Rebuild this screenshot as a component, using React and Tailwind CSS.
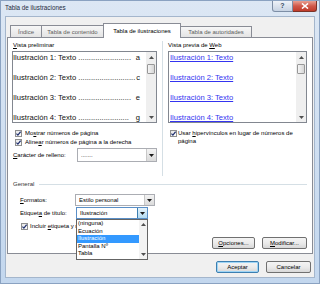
import React from 'react';

// Windows 7 "Tabla de ilustraciones" dialog, scaled down

const Down = () => (
  <svg width="5" height="3" viewBox="0 0 5 3"><path d="M0 0h5L2.5 3z" fill="#1a1a1a" /></svg>
);

const ArrowUp = () => (
  <svg width="5" height="3" viewBox="0 0 5 3"><path d="M0 3h5L2.5 0z" fill="#505050" /></svg>
);

const ArrowDown = () => (
  <svg width="5" height="3" viewBox="0 0 5 3"><path d="M0 0h5L2.5 3z" fill="#505050" /></svg>
);

function Check() {
  return (
    <span className="flex h-[7px] w-[7px] shrink-0 items-center justify-center border border-[#8e8f8f] bg-gradient-to-br from-[#e6e6e6] to-[#ffffff]">
      <svg width="5" height="5" viewBox="0 0 5 5">
        <path d="M0.4 2.6 L1.9 4.1 L4.6 0.7" fill="none" stroke="#1f2f6e" strokeWidth="1.2" />
      </svg>
    </span>
  );
}

function VScroll() {
  return (
    <div className="flex w-[10px] shrink-0 flex-col bg-[#efefef]">
      <div className="flex h-[10px] items-center justify-center">
        <ArrowUp />
      </div>
      <div className="flex-1">
        <div className="mx-[1px] mt-[2px] h-[10px] rounded-[1px] border border-[#989898] bg-gradient-to-r from-[#f5f5f5] to-[#d6d6d6]" />
      </div>
      <div className="flex h-[10px] items-center justify-center">
        <ArrowDown />
      </div>
    </div>
  );
}

function Combo({ value, width, focus }) {
  return (
    <div className={`flex h-full items-center border bg-white ${width} ${focus ? 'border-[#5a8fc7]' : 'border-[#abadb3]'}`}>
      <span className="flex-1 truncate pl-[3px]">{value}</span>
      <span
        className={`flex h-full w-[10px] items-center justify-center border-l ${
          focus ? 'border-[#3c7fb1] bg-gradient-to-b from-[#e6f3fb] to-[#b3dbf2]' : 'border-[#c8c8c8] bg-gradient-to-b from-[#f3f3f3] to-[#dadada]'
        }`}
      >
        <Down />
      </span>
    </div>
  );
}

function Btn({ children, width, def }) {
  return (
    <div
      className={`flex h-full items-center justify-center rounded-[2px] border bg-gradient-to-b from-[#f4f4f4] via-[#ebebeb] to-[#d8d8d8] ${width} ${
        def ? 'border-[#3c7fb1] shadow-[inset_0_0_0_1px_#9fd5f5]' : 'border-[#707070]'
      }`}
    >
      {children}
    </div>
  );
}

const u = (c) => <span className="underline decoration-[0.5px] underline-offset-[1px]">{c}</span>;

const preview = [
  ['Ilustración 1: Texto', '.........................', ' a'],
  ['Ilustración 2: Texto', '...........................', 'c'],
  ['Ilustración 3: Texto', '.........................', ' e'],
  ['Ilustración 4: Texto', '........................', ' g'],
];

export default function App() {
  return (
    <div className="flex h-[284px] w-[320px] flex-col overflow-hidden border border-[#8aa2c1] bg-gradient-to-b from-[#dce7f4] to-[#c3d7ee] font-['Liberation_Sans','Arial',sans-serif] text-[6px] leading-[8px] text-black">
      {/* title bar */}
      <div className="flex h-[15px] shrink-0 items-start justify-between">
        <span className="pl-[4px] pt-[3px] text-[6.3px] leading-[8px] text-[#1e2b3c]">Tabla de ilustraciones</span>
        <div className="mr-[2px] flex h-[11px] items-stretch">
          <div className="flex w-[21px] items-center justify-center rounded-bl-[3px] border border-t-0 border-[#7d8ea6] bg-gradient-to-b from-[#eef2f8] to-[#c7d3e3] text-[7px] font-bold text-[#384a62]">
            ?
          </div>
          <div className="flex w-[24px] items-center justify-center rounded-br-[3px] border border-l-0 border-t-0 border-[#7b3328] bg-gradient-to-b from-[#e8a093] via-[#d0584a] to-[#c03b2a]">
            <svg width="8" height="6" viewBox="0 0 8 6">
              <path d="M1 0.5 L7 5.5 M7 0.5 L1 5.5" stroke="#ffffff" strokeWidth="1.6" />
            </svg>
          </div>
        </div>
      </div>

      {/* client */}
      <div className="mx-[4px] flex h-[262px] shrink-0 flex-col border border-[#a4b6cc] bg-[#f0f0f0] px-[1px] pt-[6px]">
        {/* tabs */}
        <div className="relative z-10 flex h-[14px] shrink-0 items-end pl-[3px] text-[#5e5e5e]">
          <div className="flex h-[12px] w-[32px] items-center justify-center border border-b-0 border-[#898c95] bg-gradient-to-b from-[#f7f7f7] to-[#e4e4e4]">
            Índice
          </div>
          <div className="ml-[-1px] flex h-[12px] w-[63px] items-center justify-center border border-b-0 border-[#898c95] bg-gradient-to-b from-[#f7f7f7] to-[#e4e4e4]">
            Tabla de contenido
          </div>
          <div className="relative z-10 mb-[-1px] ml-[-1px] flex h-[15px] w-[78px] items-center justify-center border border-b-0 border-[#898c95] bg-white pb-[1px] text-black">
            Tabla de ilustraciones
          </div>
          <div className="ml-[-1px] flex h-[11px] w-[72px] items-center justify-center border border-b-0 border-[#898c95] bg-gradient-to-b from-[#f7f7f7] to-[#e4e4e4]">
            Tabla de autoridades
          </div>
        </div>

        {/* panel */}
        <div className="relative flex h-[217px] shrink-0 flex-col border border-[#898c95] bg-white">
          <div className="flex pt-[3px]">
            {/* left */}
            <div className="ml-[4px] flex w-[145px] flex-col">
              <div className="h-[8px] pl-[1px]">{u('V')}ista preliminar</div>
              <div className="mt-[2px] flex h-[72px] border border-[#828790]">
                <div className="min-w-0 flex-1 overflow-hidden pr-[6px] text-[7.6px] leading-[11px] text-[#111]">
                  {preview.map(([t, d, l]) => (
                    <div key={t} className="flex h-[20px] items-start justify-between whitespace-pre">
                      <span>{t} {d}</span>
                      <span>{l}</span>
                    </div>
                  ))}
                </div>
                <VScroll />
              </div>
              <div className="mt-[6px] flex h-[8px] items-center gap-[3px] pl-[3px]">
                <Check />
                <span>Mo{u('s')}trar números de página</span>
              </div>
              <div className="mt-[1px] flex h-[8px] items-center gap-[3px] pl-[3px]">
                <Check />
                <span>Aline{u('a')}r números de página a la derecha</span>
              </div>
              <div className="mt-[2px] flex h-[14px] items-center">
                <span className="w-[65px] pl-[1px]">{u('C')}arácter de relleno:</span>
                <Combo value="......." width="w-[80px]" />
              </div>
            </div>

            {/* right */}
            <div className="ml-[5px] flex h-[135px] w-[145px] flex-col border-l border-[#d5dfe5] pl-[5px]">
              <div className="h-[8px]">Vista previa de {u('W')}eb</div>
              <div className="mt-[2px] flex h-[72px] w-[139px] border border-[#828790]">
                <div className="min-w-0 flex-1 overflow-hidden pl-[1px] text-[7.6px] leading-[11px] text-[#3434f0]">
                  {preview.map(([t]) => (
                    <div key={t} className="h-[20px] whitespace-nowrap">
                      <span className="underline decoration-[0.6px] underline-offset-[1px]">{t}</span>
                    </div>
                  ))}
                </div>
                <VScroll />
              </div>
              <div className="mt-[6px] flex items-start gap-[1px] pl-[2px]">
                <span className="pt-[1px]">
                  <Check />
                </span>
                <span className="w-[130px] leading-[8px]">Usar {u('h')}ipervínculos en lugar de números de página</span>
              </div>
            </div>
          </div>

          {/* general */}
          <div className="mt-[4px] flex h-[8px] items-center pl-[5px] pr-[5px]">
            <span className="text-[#333]">General</span>
            <span className="ml-[5px] h-px flex-1 bg-[#d5dfe5]" />
          </div>
          <div className="mt-[6px] flex h-[12px] items-center pl-[12px]">
            <span className="w-[55px]">{u('F')}ormatos:</span>
            <Combo value="Estilo personal" width="w-[80px]" />
          </div>
          <div className="mt-[1px] flex h-[12px] items-center pl-[12px]">
            <span className="w-[56px]">Etiquet{u('a')} de título:</span>
            <Combo value="Ilustración" width="w-[72px]" focus />
          </div>
          <div className="mt-[3px] flex h-[8px] items-center gap-[2px] pl-[13px]">
            <Check />
            <span>Incluir {u('e')}tiqueta y número</span>
          </div>
          <div className="mt-[7px] flex h-[12px] justify-end gap-[7px] pr-[5px]">
            <Btn width="w-[43px]">{u('O')}pciones...</Btn>
            <Btn width="w-[45px]">{u('M')}odificar...</Btn>
          </div>

          {/* open dropdown list */}
          <div className="absolute left-[68px] top-[181px] z-20 flex h-[41px] w-[72px] border border-[#646464] bg-white">
            <div className="flex-1 leading-[7.5px]">
              <div className="pl-[1px]">(ninguna)</div>
              <div className="pl-[1px]">Ecuación</div>
              <div className="bg-[#3399ff] pl-[1px] text-white">Ilustración</div>
              <div className="pl-[1px]">Pantalla Nº</div>
              <div className="pl-[1px]">Tabla</div>
            </div>
            <div className="flex w-[8px] flex-col justify-between bg-[#f3f3f3] py-[3px]">
              <div className="flex justify-center">
                <ArrowUp />
              </div>
              <div className="flex justify-center">
                <ArrowDown />
              </div>
            </div>
          </div>
        </div>

        {/* bottom buttons */}
        <div className="mt-[7px] flex h-[12px] shrink-0 justify-end gap-[7px] pr-[2px]">
          <Btn width="w-[43px]" def>
            Aceptar
          </Btn>
          <Btn width="w-[45px]">Cancelar</Btn>
        </div>
      </div>
    </div>
  );
}
